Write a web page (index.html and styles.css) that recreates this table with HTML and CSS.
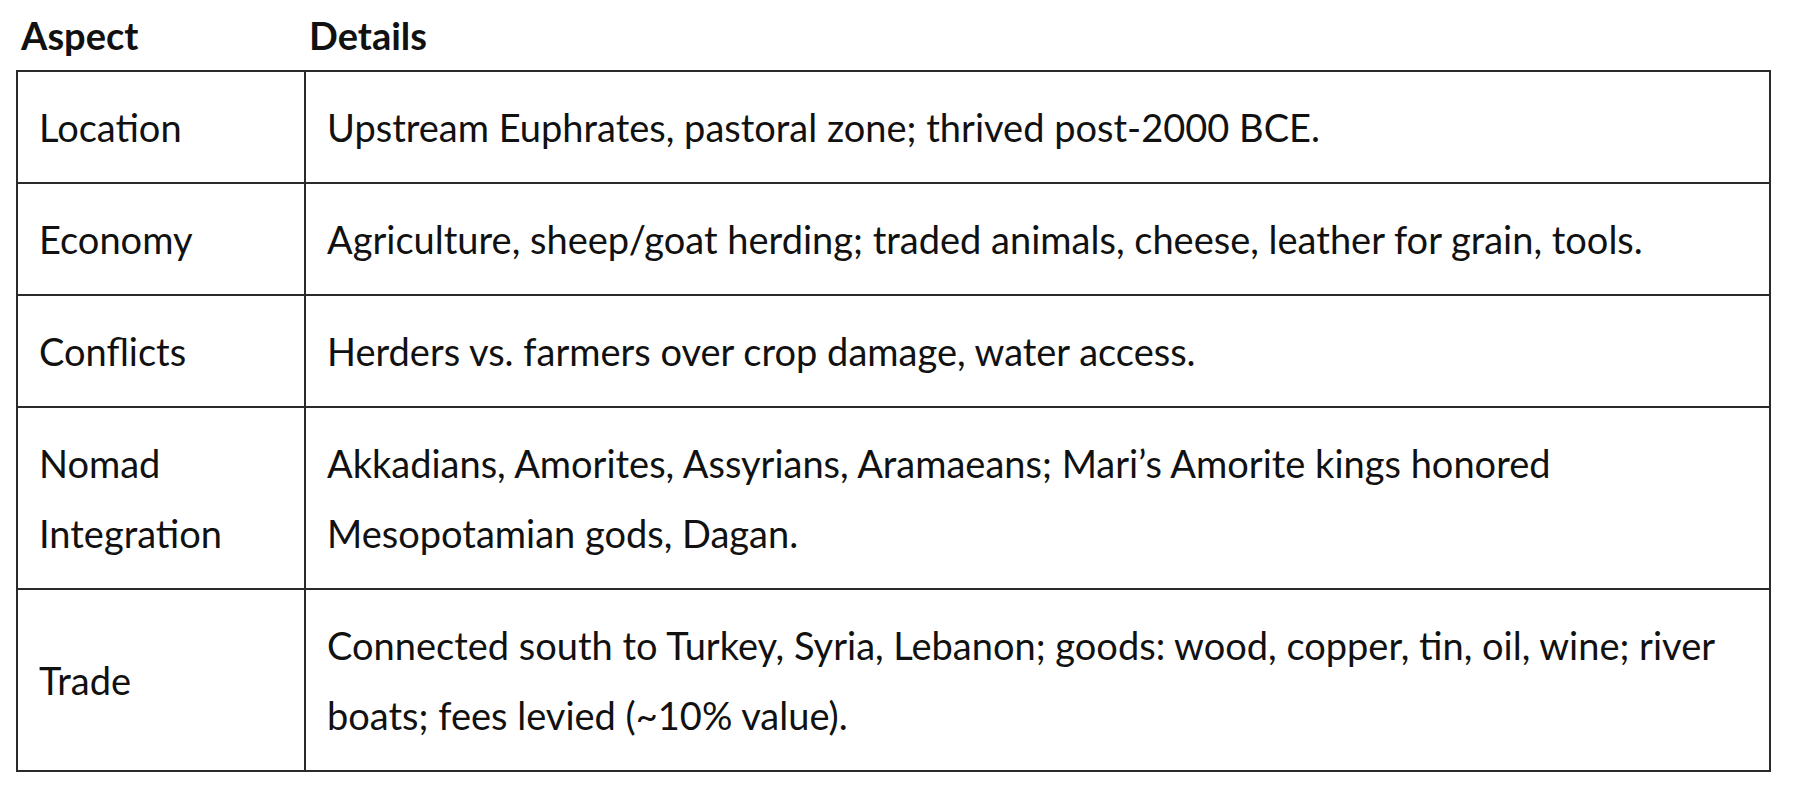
FILE: index.html
```html
<!DOCTYPE html>
<html>
<head>
<meta charset="utf-8">
<link rel="stylesheet" href="styles.css">
</head>
<body>
<table class="info">
  <colgroup><col class="c1"><col class="c2"></colgroup>
  <thead>
    <tr><th>Aspect</th><th>Details</th></tr>
  </thead>
  <tbody>
    <tr><td>Location</td><td>Upstream Euphrates, pastoral zone; thrived post-2000 BCE.</td></tr>
    <tr><td>Economy</td><td>Agriculture, sheep/goat herding; traded animals, cheese, leather for grain, tools.</td></tr>
    <tr><td>Conflicts</td><td>Herders vs. farmers over crop damage, water access.</td></tr>
    <tr><td>Nomad Integration</td><td>Akkadians, Amorites, Assyrians, Aramaeans; Mari’s Amorite kings honored Mesopotamian gods, Dagan.</td></tr>
    <tr><td>Trade</td><td>Connected south to Turkey, Syria, Lebanon; goods: wood, copper, tin, oil, wine; river boats; fees levied (~10% value).</td></tr>
  </tbody>
</table>
</body>
</html>
```
FILE: styles.css
```css
html, body {
  margin: 0;
  padding: 0;
  background: #fff;
}
body {
  padding: 0 0 0 16px;
  font-family: Lato, "Open Sans", sans-serif;
  color: #111;
}
.info {
  border-collapse: collapse;
  width: 1755px;
  font-size: 38px;
  line-height: 70px;
}
.c1 { width: 288px; }
.info th {
  text-align: left;
  font-weight: 700;
  padding: 0 4px;
  border: none;
}
.info td {
  border: 2px solid #2a2a2a;
  padding: 20px 21px;
  vertical-align: middle;
}
```
